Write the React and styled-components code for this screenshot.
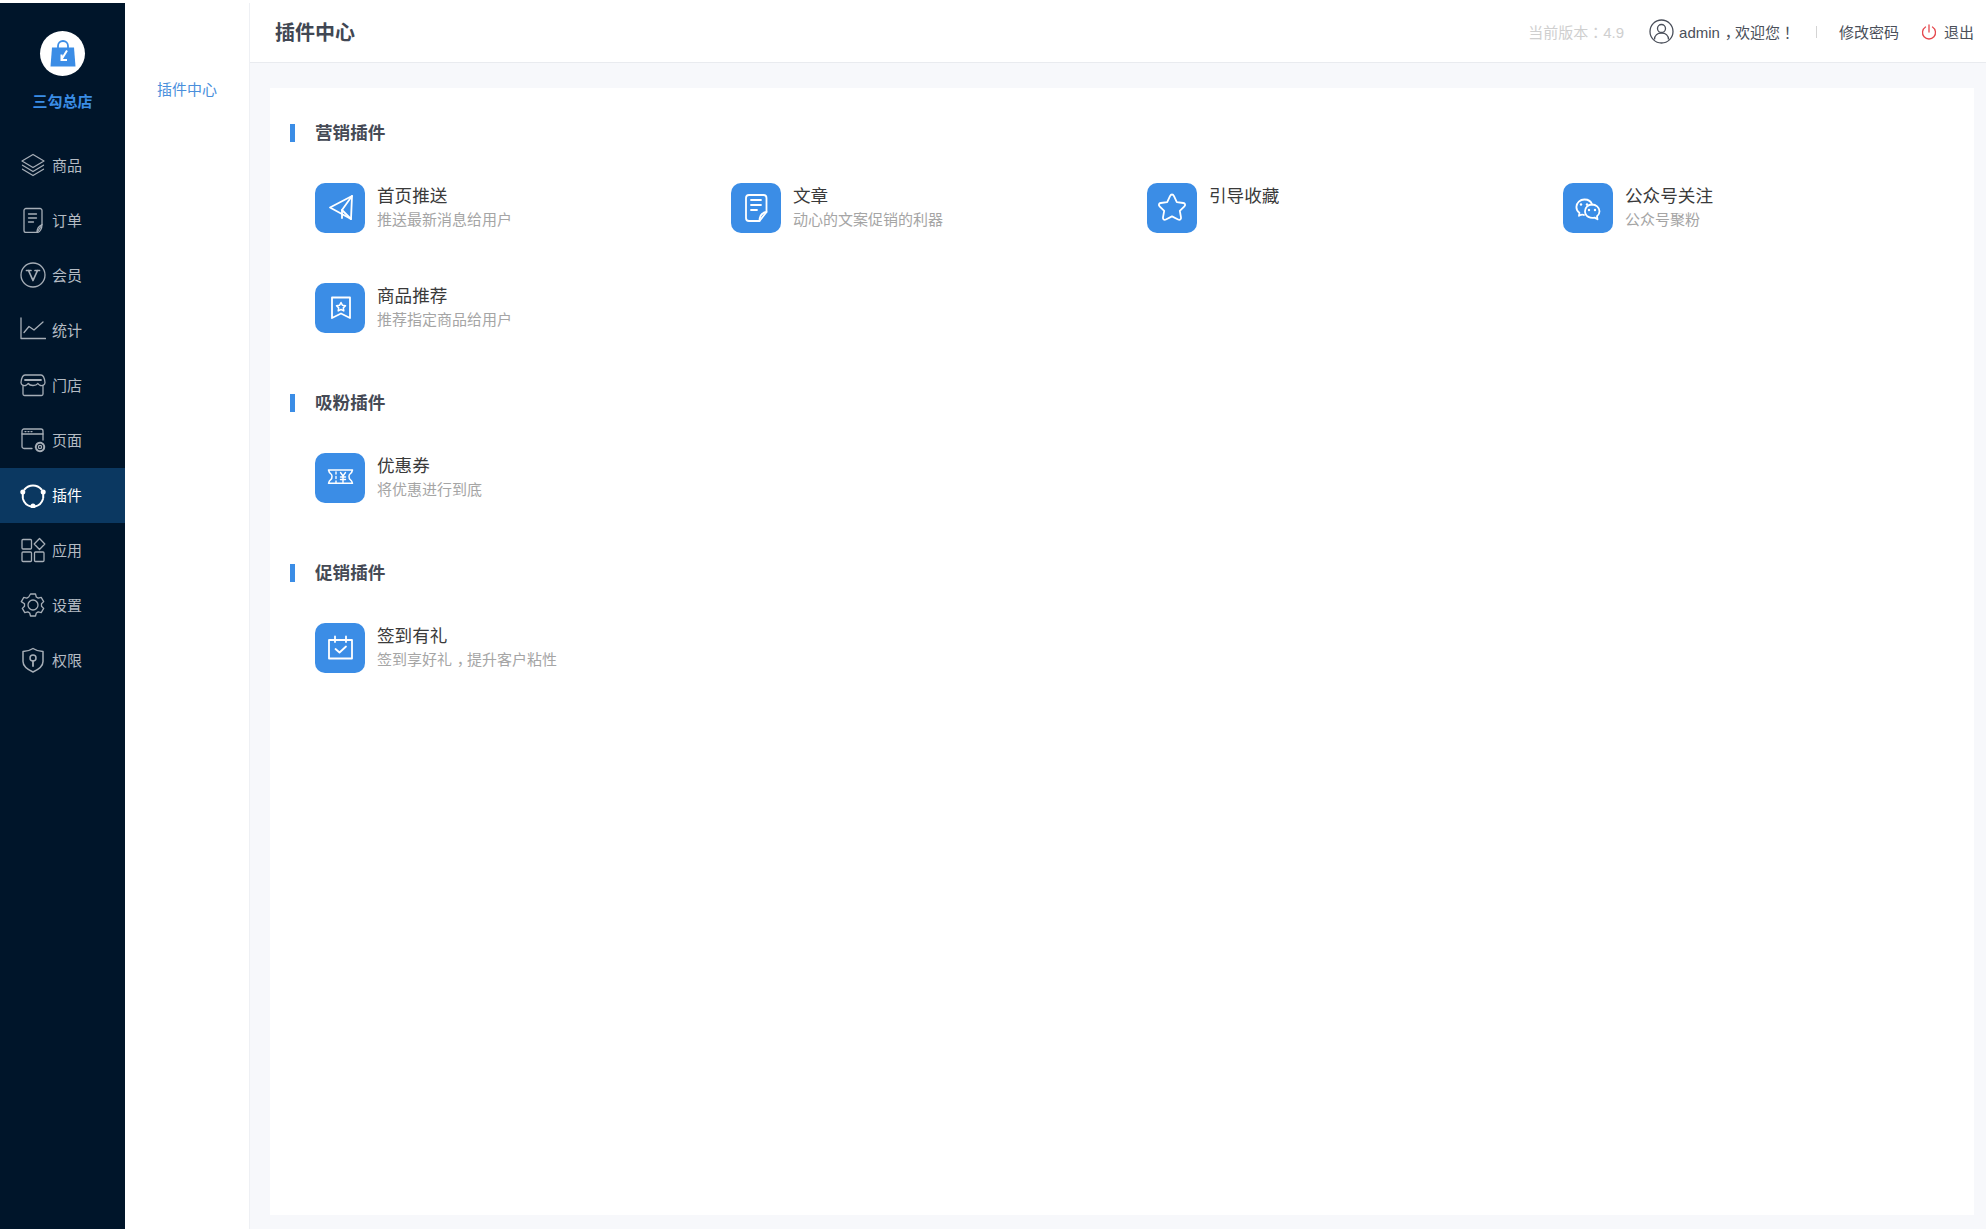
import React from "react";
import styled, { createGlobalStyle } from "styled-components";

const FONT = `"Liberation Sans", "Noto Sans CJK SC", sans-serif`;

const Global = createGlobalStyle`
  html, body { margin: 0; padding: 0; background: #fff; font-family: ${FONT}; text-spacing-trim: space-all; }
  * { box-sizing: border-box; }
`;

const Page = styled.div`
  display: flex;
  height: 1229px;
  padding-top: 3px;
  overflow: hidden;
`;
const Sidebar = styled.nav`
  width: 125px;
  flex: none;
  background: #00152a;
  display: flex;
  flex-direction: column;
  height: 1230px;
`;
const Brand = styled.div`
  display: flex;
  flex-direction: column;
  align-items: center;
  padding-top: 28px;
  height: 135px;
`;
const LogoCircle = styled.div`
  width: 45px;
  height: 45px;
  border-radius: 50%;
  background: #fff;
  display: flex;
  align-items: center;
  justify-content: center;
`;
const BrandName = styled.div`
  margin-top: 14px;
  color: #3b8de6;
  font-size: 15px;
  line-height: 24px;
  font-weight: 700;
`;
const MenuItem = styled.div`
  height: 55px;
  display: flex;
  align-items: center;
  padding: 0 0 2px 20px;
  gap: 6px;
  font-size: 15px;
  color: ${(p) => (p.$active ? "#fff" : "#b4bbc3")};
  background: ${(p) => (p.$active ? "#0b3861" : "transparent")};
  svg { flex: none; color: ${(p) => (p.$active ? "#fff" : "#a6aeb7")}; }
`;
const SubSide = styled.aside`
  width: 125px;
  flex: none;
  background: #fff;
  border-right: 1px solid #eef0f4;
  padding-top: 75px;
  text-align: center;
  font-size: 15px;
  line-height: 24px;
  color: #4a8fdc;
`;
const Main = styled.main`
  flex: 1;
  min-width: 0;
  display: flex;
  flex-direction: column;
  background: #f7f8fb;
`;
const Header = styled.header`
  height: 60px;
  flex: none;
  background: #fff;
  border-bottom: 1px solid #e9ebef;
  display: flex;
  align-items: center;
  padding: 0 12px 2px 25px;
`;
const HeaderTitle = styled.h1`
  margin: 0;
  font-size: 20px;
  font-weight: 700;
  color: #414753;
  flex: 1;
`;
const Version = styled.span`
  font-size: 15px;
  color: #cfcfcf;
  margin-right: 25px;
`;
const HeaderText = styled.span`
  font-size: 15px;
  color: #4a4f5a;
`;
const Punct = styled.span`
  font-family: "Noto Sans CJK TC", sans-serif;
`;
const Comma = styled.span`
  padding-left: 0.32em;
  letter-spacing: -0.32em;
`;
const UserGroup = styled.div`
  display: flex;
  align-items: center;
  gap: 5px;
`;
const Divider = styled.span`
  width: 1px;
  height: 12px;
  background: #d4d4d4;
  margin: 0 22px 0 21px;
`;
const Logout = styled.div`
  display: flex;
  align-items: center;
  gap: 7px;
  margin-left: 22px;
`;
const Card = styled.section`
  flex: none;
  height: 1127px;
  margin: 25px 12px 0 20px;
  background: #fff;
  padding: 36px 20px 0;
`;
const Group = styled.div`
  margin-bottom: 61px;
`;
const GroupTitle = styled.h2`
  margin: 0 0 41px;
  height: 18px;
  line-height: 18px;
  font-size: 17.6px;
  font-weight: 700;
  color: #454a55;
  display: flex;
  align-items: center;
  gap: 20px;
  &::before {
    content: "";
    width: 5px;
    height: 18px;
    background: #3b8de6;
  }
`;
const Grid = styled.div`
  margin-left: 25px;
  display: grid;
  grid-template-columns: repeat(4, 416px);
  row-gap: 50px;
`;
const Item = styled.div`
  display: flex;
  gap: 12px;
  height: 50px;
`;
const IconBox = styled.div`
  width: 50px;
  height: 50px;
  flex: none;
  border-radius: 10px;
  background: #3b8de6;
  display: flex;
`;
const ItemText = styled.div`
  display: flex;
  flex-direction: column;
`;
const ItemTitle = styled.div`
  font-size: 17.6px;
  line-height: 26px;
  color: #3a3a3a;
`;
const ItemDesc = styled.div`
  font-size: 15px;
  line-height: 22px;
  color: #a5a5a5;
`;

const Ico = ({ children, s = 26, box = 26 }) => (
  <svg width={s} height={s} viewBox={`0 0 ${box} ${box}`} fill="none" stroke="currentColor" strokeWidth="1.3" strokeLinejoin="round" strokeLinecap="round">
    {children}
  </svg>
);

const menuIcons = {
  goods: (
    <Ico>
      <path d="M13 2.500 24 9l-11 6.500L2 9z" />
      <path d="M2.500 13.200 13 19.500l10.500-6.300" />
      <path d="M2.500 17.200 13 23.500l10.500-6.300" />
    </Ico>
  ),
  order: (
    <Ico>
      <path d="M22 17.500V3.500a2 2 0 0 0-2-2H6a2 2 0 0 0-2 2v20a2 2 0 0 0 2 2h11z" />
      <path d="M22 17.500c0 4-2 8-5 8 0-3 .5-6 5-8z" />
      <path d="M8.500 7h8M8.500 11h8M8.500 15h5" />
    </Ico>
  ),
  vip: (
    <Ico>
      <circle cx="13" cy="13" r="12" />
      <path d="M6.500 8.500h4.500M15 8.500h4.500M8.500 8.500l4.500 10 4.500-10" strokeWidth="1.700" />
    </Ico>
  ),
  stat: (
    <Ico>
      <path d="M1 1v20.500h24.500" />
      <path d="M4 15.500l5-6 5 3.500 9-8" />
    </Ico>
  ),
  store: (
    <Ico>
      <path d="M5 3h16c2 0 3.500 3 4 7.500 0 2.500-2.500 3.500-4.500 3-1.500-.3-2-1.500-2.700-2-1 1.500-2.500 2-4.800 2s-3.700-.5-4.800-2c-.7.5-1.200 1.700-2.700 2-2 .5-4.500-.5-4.500-3C1.500 6 3 3 5 3z" />
      <path d="M5 8h16" strokeWidth="1.800" />
      <path d="M3 14.500V22a1.500 1.500 0 0 0 1.500 1.500h17A1.500 1.500 0 0 0 23 22v-7.500" />
    </Ico>
  ),
  page: (
    <Ico>
      <path d="M12 21.500H4a2 2 0 0 1-2-2V4a2 2 0 0 1 2-2h17a2 2 0 0 1 2 2v9" />
      <path d="M2 7h21" />
      <path d="M5 4.600h1M8 4.600h1M11 4.600h1" />
      <circle cx="20" cy="20" r="4.200" strokeDasharray="2 1" strokeWidth="2" />
      <circle cx="20" cy="20" r="1.600" />
    </Ico>
  ),
  plugin: (
    <Ico>
      <path d="M4.500 7.500a11 11 0 0 1 17 0M3 17a11 11 0 0 0 8 7.500M15 24.500a11 11 0 0 0 8-7.500M2.800 11v5M23.200 11v5" strokeWidth="2" />
      <circle cx="2.800" cy="10" r="2.500" fill="currentColor" stroke="none" />
      <circle cx="23.200" cy="10" r="2.500" fill="currentColor" stroke="none" />
      <circle cx="13" cy="24" r="2.500" fill="currentColor" stroke="none" />
    </Ico>
  ),
  app: (
    <Ico>
      <rect x="2" y="2.500" width="9.500" height="9.500" rx="1" />
      <rect x="2" y="15" width="9.500" height="9.500" rx="1" />
      <rect x="14.500" y="15" width="9.500" height="9.500" rx="1" />
      <path d="M19.500 1.500 24.800 7l-5.300 5.500L14.200 7z" />
    </Ico>
  ),
  setting: (
    <Ico>
      <path d="M10.500 2h5l.8 3 1.900 1.100 3-.8 2.500 4.300-2.200 2.200v2.400l2.200 2.200-2.500 4.300-3-.8-1.900 1.100-.8 3h-5l-.8-3-1.900-1.100-3 .8-2.500-4.300 2.200-2.200v-2.400L1.300 9.600l2.500-4.300 3 .8 1.900-1.100z" />
      <circle cx="13" cy="13" r="5" />
    </Ico>
  ),
  auth: (
    <Ico>
      <path d="M13 1.500c3 2 6.500 3 10 3v10c0 4.500-4.500 8-10 10.500C7.500 22.500 3 19 3 14.500v-10c3.500 0 7-1 10-3z" strokeWidth="1.500" />
      <circle cx="13" cy="11" r="3" strokeWidth="1.500" />
      <path d="M13 14v5" strokeWidth="1.800" />
    </Ico>
  ),
};

const menu = [
  ["goods", "商品"],
  ["order", "订单"],
  ["vip", "会员"],
  ["stat", "统计"],
  ["store", "门店"],
  ["page", "页面"],
  ["plugin", "插件", true],
  ["app", "应用"],
  ["setting", "设置"],
  ["auth", "权限"],
];

const W = ({ children }) => (
  <svg width="50" height="50" viewBox="0 0 50 50" fill="none" stroke="#fff" strokeWidth="1.800" strokeLinejoin="round" strokeLinecap="round">
    {children}
  </svg>
);

const itemIcons = {
  plane: (
    <W>
      <path d="M15 24.500 37 13l-1 23z" />
      <path d="M37 13 27 27v8" />
      <path d="M27 27l9 9" />
    </W>
  ),
  doc: (
    <W>
      <path d="M35.500 29V15a3 3 0 0 0-3-3H18a3 3 0 0 0-3 3v20a3 3 0 0 0 3 3h10.500z" />
      <path d="M35.500 29c-4 .5-7 3-7 9" />
      <path d="M20 17h10M20 22h10M20 27h6" />
    </W>
  ),
  star: (
    <W>
      <path d="M25 11.500c1 0 1.500.6 2 1.600l2.800 6 6.400.9c2 .3 2.500 2 1.200 3.300l-4.600 4.600 1.200 6.500c.3 2-1.200 3-2.900 2.100L25 33.400l-6.100 3.100c-1.700.9-3.200-.1-2.900-2.100l1.200-6.500-4.600-4.600c-1.300-1.300-.8-3 1.200-3.300l6.400-.9 2.800-6c.5-1 1-1.600 2-1.600z" />
    </W>
  ),
  wechat: (
    <W>
      <path d="M21 32c-1.200-.8-1.500-.7-3-.2l-2 1 .4-3c-2-1.300-3-3.500-3-5.800 0-4.500 3.800-7.500 8-7.500 3.500 0 6.800 2 7.700 5.200" />
      <path d="M29 21.500c3.800 0 7.500 2.700 7.500 6.800 0 2.100-1 3.800-2.500 5l.5 3-2.900-1.700c-3.800 1-9.600-.8-9.600-6.300 0-4 3.300-6.800 7-6.800z" />
      <circle cx="18" cy="21.500" r="1.200" fill="#fff" stroke="none" />
      <circle cx="24" cy="21.500" r="1.200" fill="#fff" stroke="none" />
      <circle cx="26" cy="27" r="1.200" fill="#fff" stroke="none" />
      <circle cx="32" cy="27" r="1.200" fill="#fff" stroke="none" />
    </W>
  ),
  bookmark: (
    <W>
      <path d="M17 14.500h18v20.500l-9-4.500-9 4.500z" />
      <path d="M26 19.500l1.500 2.800 3 .4-2.200 2.200.5 3-2.800-1.400-2.800 1.400.5-3-2.200-2.200 3-.4z" strokeWidth="1.500" />
    </W>
  ),
  coupon: (
    <W>
      <path d="M13.500 17h24c-.3 1.500-1 3-2.500 4-1 .7-1 1.800-1 2.500s0 2 1 2.800c1.500 1 2.200 2.200 2.500 4h-24c.3-1.800 1-3 2.500-4 1-.8 1-2 1-2.800s0-1.800-1-2.500c-1.500-1-2.200-2.500-2.500-4z" strokeWidth="1.500" />
      <path d="M21 19v2M21 23.500v2M21 28v1.500" strokeWidth="1.400" />
      <path d="M25.500 19.500l2.500 3.500 2.500-3.500M28 23v6.500M25.500 24h5M25.500 26.500h5" strokeWidth="1.400" />
    </W>
  ),
  calendar: (
    <W>
      <path d="M14 17h23v18.500H14z" />
      <path d="M20 13.500V19M31 13.500V19" />
      <path d="M20.500 26l4 3.500 6.500-6" />
    </W>
  ),
};

const groups = [
  {
    title: "营销插件",
    items: [
      ["plane", "首页推送", "推送最新消息给用户"],
      ["doc", "文章", "动心的文案促销的利器"],
      ["star", "引导收藏", ""],
      ["wechat", "公众号关注", "公众号聚粉"],
      ["bookmark", "商品推荐", "推荐指定商品给用户"],
    ],
  },
  { title: "吸粉插件", items: [["coupon", "优惠券", "将优惠进行到底"]] },
  {
    title: "促销插件",
    items: [["calendar", "签到有礼", <>签到享好礼<Comma>，</Comma>提升客户粘性</>]],
  },
];

export default function App() {
  return (
    <>
      <Global />
      <Page>
        <Sidebar>
          <Brand>
            <LogoCircle>
              <svg width="26" height="28" viewBox="0 0 26 28">
                <path d="M2 7.500h22L25.500 26.500H.5z" fill="#3b8de6" />
                <path d="M8 9V6a5 5 0 0 1 10 0V9" fill="none" stroke="#3b8de6" strokeWidth="1.800" />
                <path d="M17 10.500 11.500 19.500M11.500 14.500v5.500H17" fill="none" stroke="#fff" strokeWidth="2" />
              </svg>
            </LogoCircle>
            <BrandName>三勾总店</BrandName>
          </Brand>
          {menu.map(([k, label, active]) => (
            <MenuItem key={k} $active={active}>
              {menuIcons[k]}
              {label}
            </MenuItem>
          ))}
        </Sidebar>
        <SubSide>插件中心</SubSide>
        <Main>
          <Header>
            <HeaderTitle>插件中心</HeaderTitle>
            <Version>当前版本<Punct>：</Punct>4.9</Version>
            <UserGroup>
              <svg width="25" height="25" viewBox="0 0 25 25" fill="none" stroke="#4a4f5a" strokeWidth="1.300">
                <circle cx="12.500" cy="12.500" r="11.500" />
                <circle cx="12.500" cy="9.500" r="4" />
                <path d="M5.500 20.500c0-4 3-6.500 7-6.500s7 2.500 7 6.500" />
              </svg>
              <HeaderText>admin<Comma>，</Comma>欢迎您<Punct>！</Punct></HeaderText>
            </UserGroup>
            <Divider />
            <HeaderText>修改密码</HeaderText>
            <Logout>
              <svg width="16" height="16" viewBox="0 0 16 16" fill="none" stroke="#e5484d" strokeWidth="1.300" strokeLinecap="round">
                <path d="M4.500 3a6.500 6.500 0 1 0 7 0" />
                <path d="M8 1v7" />
              </svg>
              <HeaderText>退出</HeaderText>
            </Logout>
          </Header>
          <Card>
            {groups.map((g) => (
              <Group key={g.title}>
                <GroupTitle>{g.title}</GroupTitle>
                <Grid>
                  {g.items.map(([ic, t, d]) => (
                    <Item key={t}>
                      <IconBox>{itemIcons[ic]}</IconBox>
                      <ItemText>
                        <ItemTitle>{t}</ItemTitle>
                        {d && <ItemDesc>{d}</ItemDesc>}
                      </ItemText>
                    </Item>
                  ))}
                </Grid>
              </Group>
            ))}
          </Card>
        </Main>
      </Page>
    </>
  );
}
